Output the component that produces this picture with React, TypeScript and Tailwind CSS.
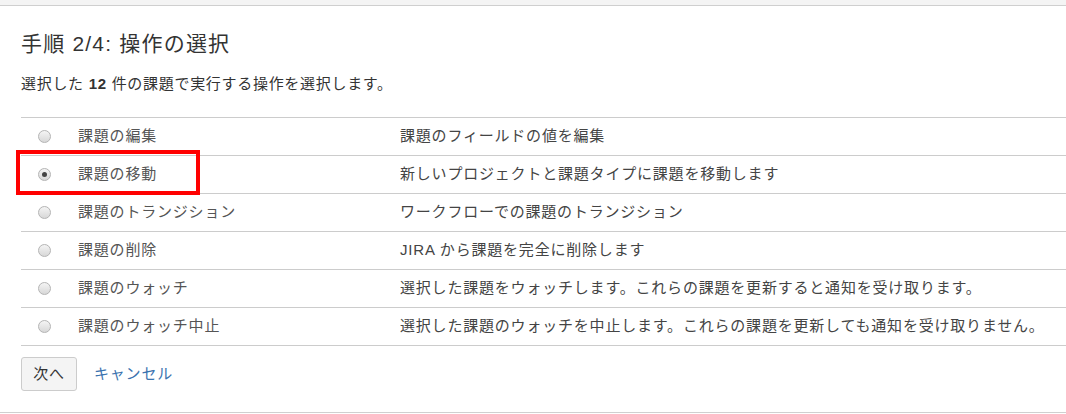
const operations = [
  { id: 'edit', label: '課題の編集', desc: '課題のフィールドの値を編集' },
  { id: 'move', label: '課題の移動', desc: '新しいプロジェクトと課題タイプに課題を移動します' },
  { id: 'transition', label: '課題のトランジション', desc: 'ワークフローでの課題のトランジション' },
  { id: 'delete', label: '課題の削除', desc: 'JIRA から課題を完全に削除します' },
  { id: 'watch', label: '課題のウォッチ', desc: '選択した課題をウォッチします。これらの課題を更新すると通知を受け取ります。' },
  { id: 'unwatch', label: '課題のウォッチ中止', desc: '選択した課題のウォッチを中止します。これらの課題を更新しても通知を受け取りません。' },
];

function Radio({ checked }: { checked: boolean }) {
  return (
    <span className="flex h-[13px] w-[13px] items-center justify-center rounded-full border border-[#b4b4b4] bg-gradient-to-b from-[#f4f4f4] to-[#d8d8d8]">
      {checked && <span className="h-[5px] w-[5px] rounded-full bg-[#444]" />}
    </span>
  );
}

export default function App() {
  const selected = 'move';

  return (
    <div
      className="relative h-[414px] w-[1066px] overflow-hidden bg-white text-[#333]"
      style={{ fontFamily: '"Liberation Sans", Arial, "Noto Sans CJK JP", sans-serif' }}
    >
      <div className="h-[6px] border-b border-[#cfcfcf] bg-[#f4f4f4]" />

      <div className="pl-[21px]">
        <h2 className="mt-[23px] text-[21px] leading-[30px] tracking-[1.2px] text-[#333]">手順 2/4: 操作の選択</h2>
        <p className="mt-[15px] text-[15px] leading-[20px] tracking-[0.7px]">
          選択した <strong className="font-bold">12</strong> 件の課題で実行する操作を選択します。
        </p>

        <div className="mt-[23px] border-t border-[#cccccc]">
          {operations.map((op) => (
            <div
              key={op.id}
              className="flex h-[38px] items-center border-b border-[#cccccc] text-[15px] tracking-[0.8px]"
            >
              <div className="flex w-[57px] justify-start pl-[17px]">
                <Radio checked={op.id === selected} />
              </div>
              <div className="w-[322px] text-[#555]">{op.label}</div>
              <div className="text-[#444]">{op.desc}</div>
            </div>
          ))}
        </div>

        <div className="mt-[11px] flex items-center gap-[17px]">
          <button className="h-[34px] w-[56px] rounded-[3px] border border-[#ccc] bg-[#f4f4f4] text-[15px] tracking-[0.8px] text-[#333]">
            次へ
          </button>
          <a className="text-[15px] tracking-[0.8px] text-[#3b73af]">キャンセル</a>
        </div>
      </div>

      <div className="absolute bottom-0 left-0 right-0 h-[2px] border-t border-[#d0d0d0]" />

      <div className="absolute left-[16px] top-[150px] h-[45px] w-[184px] border-[4px] border-[#ff0000]" />
    </div>
  );
}
